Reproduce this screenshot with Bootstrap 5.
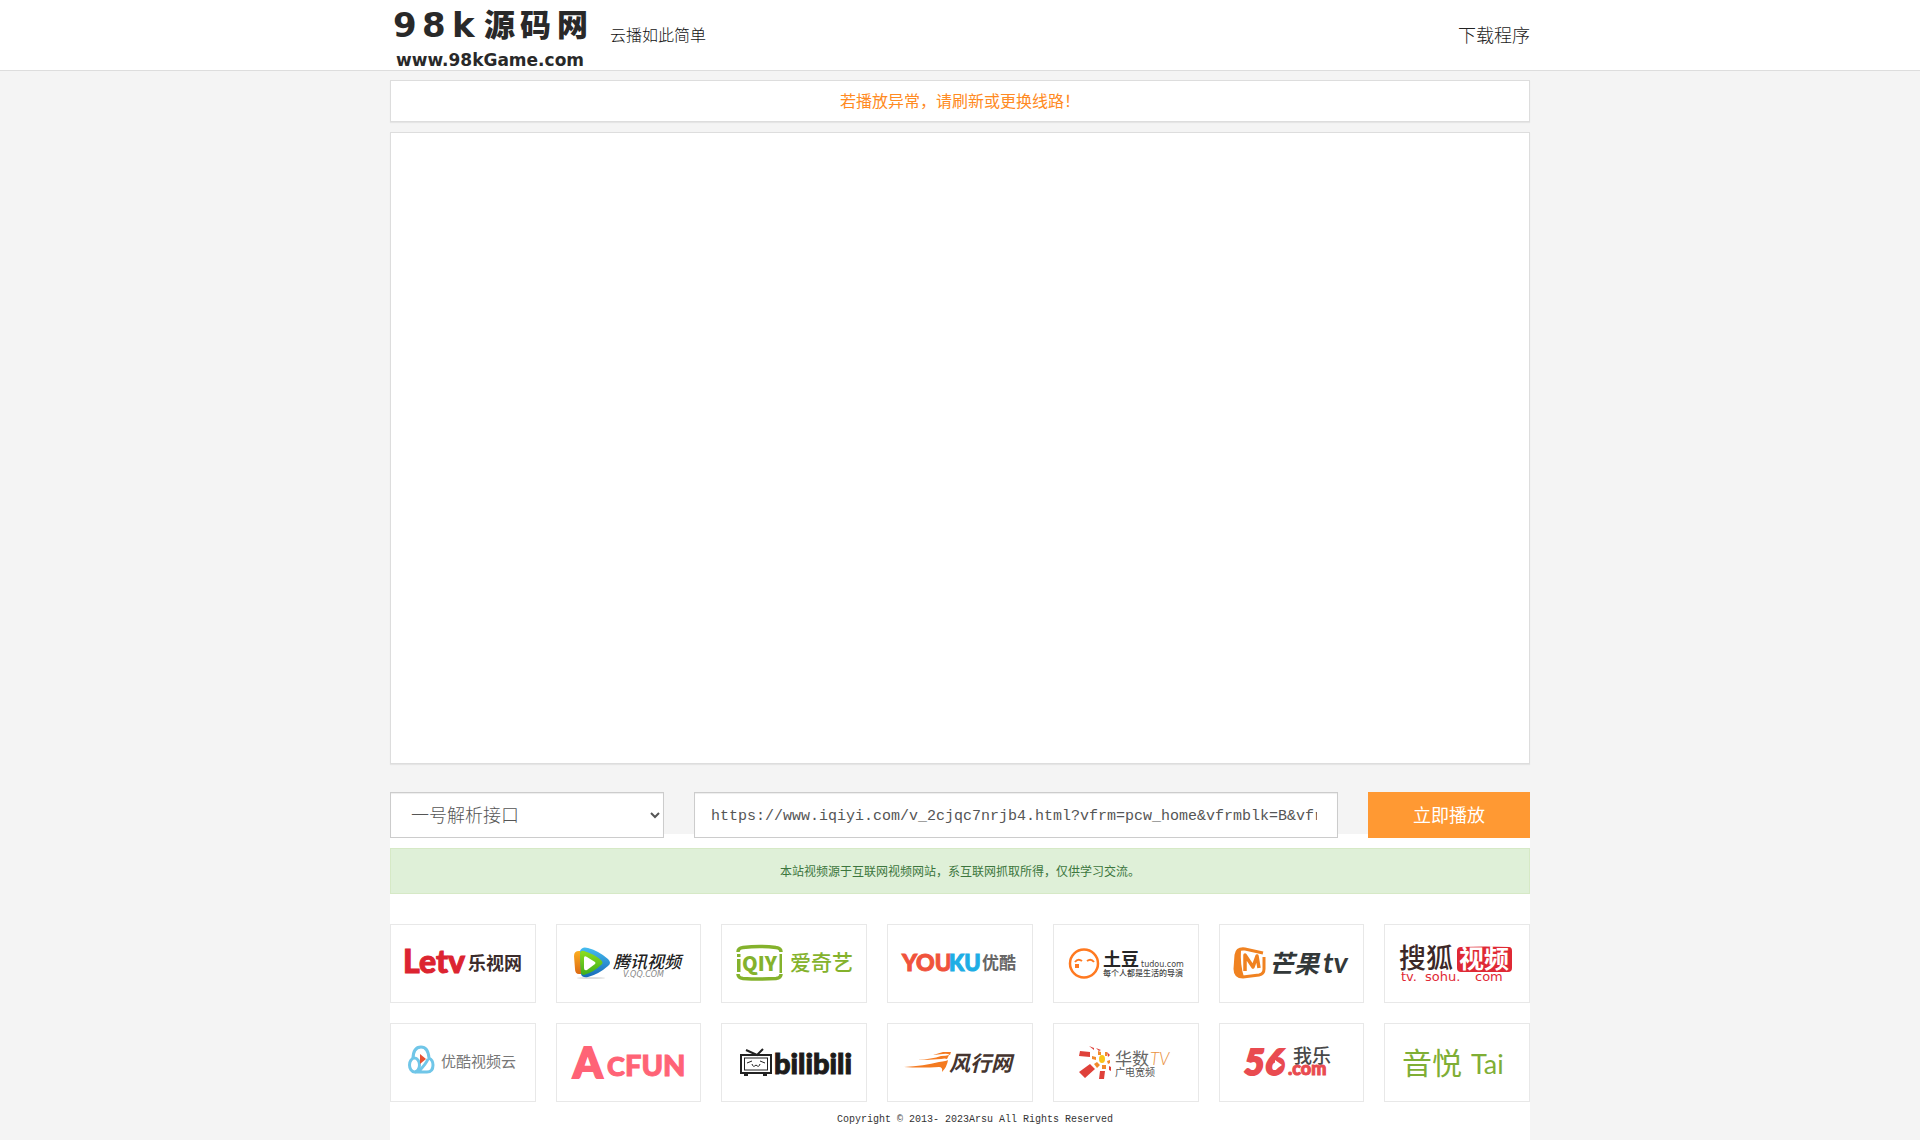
<!DOCTYPE html>
<html lang="zh-CN">
<head>
<meta charset="utf-8">
<meta name="viewport" content="width=device-width, initial-scale=1">
<title>98k源码网 - 云播如此简单</title>
<link rel="stylesheet" href="https://cdn.jsdelivr.net/npm/bootstrap@5.3.0/dist/css/bootstrap.min.css">
<style>
  body { background: #f4f4f4; color: #333; font-family: "Noto Sans CJK SC", sans-serif; font-size: 12px; line-height: 20px; }
  .wrap { width: 100%; max-width: 1140px; margin-inline: auto; }
  .site-head { border-bottom: 1px solid #ddd; margin-bottom: 9px; }
  .site-head .wrap { height: 70px; }
  .brand-logo { width: 200px; height: 70px; }
  .tagline, .dl-link { padding-bottom: 2px; font-weight: 300; }
  .tagline { font-size: 16px; margin-left: 20px; color: #111; }
  .dl-link { font-size: 18px; color: #222; text-decoration: none; }
  .panel-box { background: #fff; border: 1px solid #ddd; box-shadow: 0 1px 1px rgba(0,0,0,.06); margin-bottom: 10px; }
  .notice { height: 42px; padding-bottom: 2px; color: #ff8a22; font-size: 16px; }
  .player { aspect-ratio: 1140 / 632; margin-bottom: 28px; }
  .play-form { position: relative; z-index: 1; display: grid; grid-template-columns: 274fr 644fr 162fr; gap: 30px; }
  .play-btn { background: #ff9933; border: 0; color: #fff; font-size: 18px; padding: 0 0 2px; }
  .play-btn:hover { background: #f08a22; color: #fff; }
  .play-form select, .play-form input { min-width: 0; height: 46px; border: 1px solid #ccc; border-radius: 0; background: #fff; color: #555; box-shadow: inset 0 1px 1px rgba(0,0,0,.075); }
  .play-form select { font-size: 18px; font-weight: 300; padding: 0 1px 2px 16px; color: #555; }
  .play-form input { font-family: "Liberation Mono", monospace; font-size: 15px; padding: 2px 20px 0 16px; }
  .sources { background: #fff; margin-top: -4px; padding-top: 14px; }
  .tip { height: 46px; background: #dff0d8; border: 1px solid #d6e9c6; color: #3c763d; margin-bottom: 30px; }
  .logo-grid { display: grid; grid-template-columns: repeat(7, 1fr); gap: 20px; }
  .logo-grid a { border: 1px solid #e8e8e8; height: 79px; display: flex; justify-content: center; overflow: hidden; }
  .logo-grid svg { width: 144px; height: 77px; flex: none; }
  .copy { font-family: "Liberation Mono", monospace; font-size: 10px; padding: 8px 0 10px 30px; }
  svg text { font-family: "Noto Sans CJK SC", sans-serif; }
  svg .lat { font-family: Lato, sans-serif; font-weight: 900; }
  svg .dv { font-family: "DejaVu Sans", sans-serif; }
  @media (max-width: 767px) {
    .logo-grid { grid-template-columns: repeat(2, 1fr); }
    .play-form { grid-template-columns: 1fr; gap: 10px; }
    .play-btn { height: 46px; }
  }
</style>
</head>
<body class="d-flex flex-column min-vh-100">
<header class="site-head bg-white">
  <div class="wrap d-flex align-items-center">
    <a href="#" aria-label="98k源码网">
      <svg class="brand-logo d-block" viewBox="0 0 200 70" fill="#292929">
        <text class="dv" x="3" y="37" font-size="34" font-weight="700">9</text>
        <text class="dv" x="32" y="37" font-size="34" font-weight="700">8</text>
        <text class="dv" x="62" y="37" font-size="34" font-weight="700">k</text>
        <text x="94" y="36" font-size="31" font-weight="900">源</text>
        <text x="130" y="36" font-size="31" font-weight="900">码</text>
        <text x="167" y="36" font-size="31" font-weight="900">网</text>
        <text class="dv" x="6" y="66" font-size="17" font-weight="700">www.98kGame.com</text>
      </svg>
    </a>
    <span class="tagline">云播如此简单</span>
    <a class="dl-link ms-auto" href="#">下载程序</a>
  </div>
</header>

<main class="d-flex flex-column flex-grow-1">
  <div class="wrap">
    <div class="panel-box notice d-flex align-items-center justify-content-center">若播放异常，请刷新或更换线路！</div>
    <div class="panel-box player"></div>
    <form class="play-form" onsubmit="return false">
      <select aria-label="解析接口">
        <option>一号解析接口</option>
      </select>
      <input type="text" aria-label="视频地址" value="https://www.iqiyi.com/v_2cjqc7nrjb4.html?vfrm=pcw_home&amp;vfrmblk=B&amp;vfrmrst=home">
      <button class="play-btn" type="submit">立即播放</button>
    </form>
  </div>

  <section class="wrap sources flex-grow-1">
    <div class="tip d-flex align-items-center justify-content-center">本站视频源于互联网视频网站，系互联网抓取所得，仅供学习交流。</div>
    <nav class="logo-grid" aria-label="视频网站">
      <a href="#"><svg viewBox="1 1 144 77">
        <text class="lat" x="13" y="49" font-size="32" fill="#dc2430" stroke="#dc2430">Letv</text>
        <text x="78" y="46" font-size="18" font-weight="700" fill="#3b2c2c">乐视网</text>
      </svg></a>
      <a href="#"><svg viewBox="1 1 144 77">
        <defs>
          <linearGradient id="tqBlue" x2="0" y2="1"><stop stop-color="#45bdf0"/><stop offset="1" stop-color="#1769b8"/></linearGradient>
          <linearGradient id="tqGreen" x2="0" y2="1"><stop stop-color="#8ede1c"/><stop offset="1" stop-color="#3fae1c"/></linearGradient>
          <linearGradient id="tqOrange" x2="0" y2="1"><stop stop-color="#fcae20"/><stop offset="1" stop-color="#dc6a14"/></linearGradient>
        </defs>
        <ellipse cx="35" cy="54" rx="14" ry="1" fill="#ddd"/>
        <path d="M18 32q0-5 5-5h5v23h-5q-4 0-4-5z" fill="url(#tqOrange)"/>
        <path d="M24 27q2-5 8-3 11 3 20 11 4 4 0 7-9 8-20 11-6 1-7-3z" fill="url(#tqBlue)"/>
        <path d="M24 30q0-4 4-3 10 3 17 9 3 3 0 5-7 7-17 10-3 0-3-3-1-9-1-18z" fill="url(#tqGreen)"/>
        <path d="M28 34q0-3 3-1l8 5q1 1 0 2l-8 6q-3 1-3-2z" fill="#fff"/>
        <text x="57" y="44" font-size="17" font-style="italic" font-weight="500" fill="#222">腾讯视频</text>
        <text class="dv" x="67" y="53" font-size="8" font-style="italic" fill="#888">V.QQ.COM</text>
      </svg></a>
      <a href="#"><svg viewBox="1 1 144 77">
        <path d="M17 28q0-4 5-4.500 17-2 33 0 5 .5 5 4.500M17 50q0 4 5 4.500 17 1 33 0 5-.5 5-4.500" fill="none" stroke="#84b22c" stroke-width="3.500"/>
        <path d="M16 35h3.500v13H16zM16 30h3.500v3H16zM58.500 30H61v19h-2.500z" fill="#84b22c"/>
        <text x="21" y="47" style="font-family:'Noto Sans CJK SC',sans-serif" font-size="20" font-weight="900" fill="#84b22c">QIY</text>
        <text x="69" y="46" font-size="21" font-weight="500" fill="#84b22c">爱奇艺</text>
      </svg></a>
      <a href="#"><svg viewBox="1 1 144 77">
        <text class="lat" x="15" y="47" font-size="23" fill="#f0533c" stroke="#f0533c">YOU</text>
        <text class="lat" x="62" y="47" font-size="22" fill="#1eaee5" stroke="#1eaee5">KU</text>
        <text x="95" y="45" font-size="17" font-weight="700" fill="#666">优酷</text>
      </svg></a>
      <a href="#"><svg viewBox="1 1 144 77">
        <circle cx="31" cy="39.500" r="14" fill="none" stroke="#ff7920" stroke-width="2.500"/>
        <path d="M22 38q3-4 7-1M34 37q4-3 7 1" fill="none" stroke="#ff7920" stroke-width="2"/>
        <path d="M22 40h4v4h-4z" fill="#ff7920"/>
        <text x="50" y="42" font-size="18" font-weight="700" fill="#262626">土豆</text>
        <text class="dv" x="88" y="43" font-size="8" fill="#444">tudou.com</text>
        <text x="50" y="52" font-size="8" font-weight="500" fill="#444">每个人都是生活的导演</text>
      </svg></a>
      <a href="#"><svg viewBox="1 1 144 77">
        <path d="M45 29l-18-4q-8-1-9 6l-1 14q0 8 8 8l16-2q5-1 5-6V33" fill="none" stroke="#f08221" stroke-width="3"/>
        <path d="M19 28q-3 12-1 22 4 4 8 3-4-12-3-27z" fill="#f08221"/>
        <path d="M27 47V31l8 12 4-11 2 12" fill="none" stroke="#f08221" stroke-width="3.500" stroke-linejoin="round"/>
        <text x="51" y="49" font-size="25" font-style="italic" font-weight="700" fill="#333839">芒果</text>
        <text class="lat" x="105" y="49" font-size="29" font-style="italic" style="font-weight:700" fill="#333839">tv</text>
      </svg></a>
      <a href="#"><svg viewBox="1 1 144 77">
        <text x="15" y="44" font-size="27" font-weight="500" fill="#3c2828">搜狐</text>
        <path d="M77 23q24-1 48 0 3 0 3 4v17q0 4-4 4H77q-4 0-4-4V27q0-4 4-4z" fill="#df2935"/>
        <text x="75" y="44" font-size="25" font-weight="700" fill="#fff">视频</text>
        <text class="dv" x="17" y="57" font-size="13" fill="#df2935">tv.</text>
        <text class="dv" x="41" y="57" font-size="13" fill="#df2935">sohu.</text>
        <text class="dv" x="91" y="57" font-size="13" fill="#df2935">com</text>
      </svg></a>
      <a href="#"><svg viewBox="1 1 144 77">
        <g fill="none" stroke="#70c6e8" stroke-width="3"><ellipse cx="24.500" cy="42" rx="5" ry="7"/><path d="M23 36q0-12 8-12 7 0 8 11 4 2 4 7 0 7-6 7H25M38 36q-2 5-9 12"/></g>
        <path d="M30 31l6 5-6 5z" fill="#e65132"/>
        <text x="51" y="44" font-size="15" fill="#777">优酷视频云</text>
      </svg></a>
      <a href="#"><svg viewBox="1 1 144 77" fill="#ff6376" stroke="#ff6376">
        <text class="lat" x="17" y="55" font-size="42" stroke-width="2">A</text><text class="lat" x="51" y="53" font-size="27">C</text><text class="lat" x="69" y="53" font-size="29">FUN</text>
      </svg></a>
      <a href="#"><svg viewBox="1 1 144 77">
        <g fill="none" stroke="#222"><rect x="20" y="32" width="30" height="18" stroke-width="2"/><rect x="23.500" y="35" width="23" height="12"/><path d="M25 27l11 5 6-6M23 52h4M42 52h4" stroke-width="2"/><path d="M26 40l5-2M39 38l5 2M31 41q1 4 4 1 3 3 4-1"/></g>
        <text class="lat" x="53" y="51" font-size="29" fill="#1d1b1b" stroke="#1d1b1b">bilibili</text>
      </svg></a>
      <a href="#"><svg viewBox="1 1 144 77">
        <path d="M17 44q20-1 35-5 8-1 9-2-1 7-6 12 1-5-3-5-18 1-35 0zM30 37q15-1 24-4 5 0 8-1l-2 4q-2-1-6 0-12 1-24 1zM46 32l10-3h8l-1 3q-3-2-7-1z" fill="#f47a20"/>
        <text x="62" y="48" font-size="21" font-style="italic" font-weight="700" fill="#45342f">风行网</text>
      </svg></a>
      <a href="#"><svg viewBox="1 1 144 77">
        <ellipse cx="49" cy="36" rx="3" ry="4" fill="#f9c51b"/>
        <path d="M39 33l4 1v3l-4-1zM45 28l3 1v3h-3zM41 41l3-2 3 3-3 3zM49 42h4v4h-4zM54 38l3-1v3l-2 1zM52 29h2v4h-2z" fill="#f18a2c"/>
        <path d="M27 28l10 1v5l-11-1zM26 49l11-8 5 5-10 9zM47 48h5l-1 8h-5zM36 23l5 2v2zM43 25l5 2-2 1zM54 29l3 3-2 2zM56 43l2 1v4l-2-1z" fill="#df413a"/>
        <text x="62" y="42" font-size="17" fill="#666">华数</text>
        <text x="97" y="42" font-size="17" font-weight="300" font-style="italic" fill="#e9913e" style="font-family:Lato,sans-serif">TV</text>
        <text x="62" y="53" font-size="10" fill="#555">广电宽频</text>
      </svg></a>
      <a href="#"><svg viewBox="1 1 144 77">
        <text class="lat" x="26" y="52" font-size="36" font-style="italic" fill="#e94b50" stroke="#e94b50" stroke-width="2">56</text>
        <path d="M57 37l7 5-7 5z" fill="#fff"/>
        <text x="75" y="40" font-size="19" font-weight="500" fill="#484848">我乐</text>
        <text class="lat" x="70" y="52" font-size="18" fill="#e94b50" stroke="#e94b50">.com</text>
      </svg></a>
      <a href="#"><svg viewBox="1 1 144 77" fill="#7fae35">
        <text x="18" y="51" font-size="30">音悦</text>
        <text x="87" y="51" font-size="27" style="font-family:Lato,sans-serif">Tai</text>
      </svg></a>
    </nav>
    <footer class="copy text-center">Copyright © 2013- 2023Arsu All Rights Reserved</footer>
  </section>
</main>
<script src="https://cdn.jsdelivr.net/npm/bootstrap@5.3.0/dist/js/bootstrap.bundle.min.js"></script>
</body>
</html>
